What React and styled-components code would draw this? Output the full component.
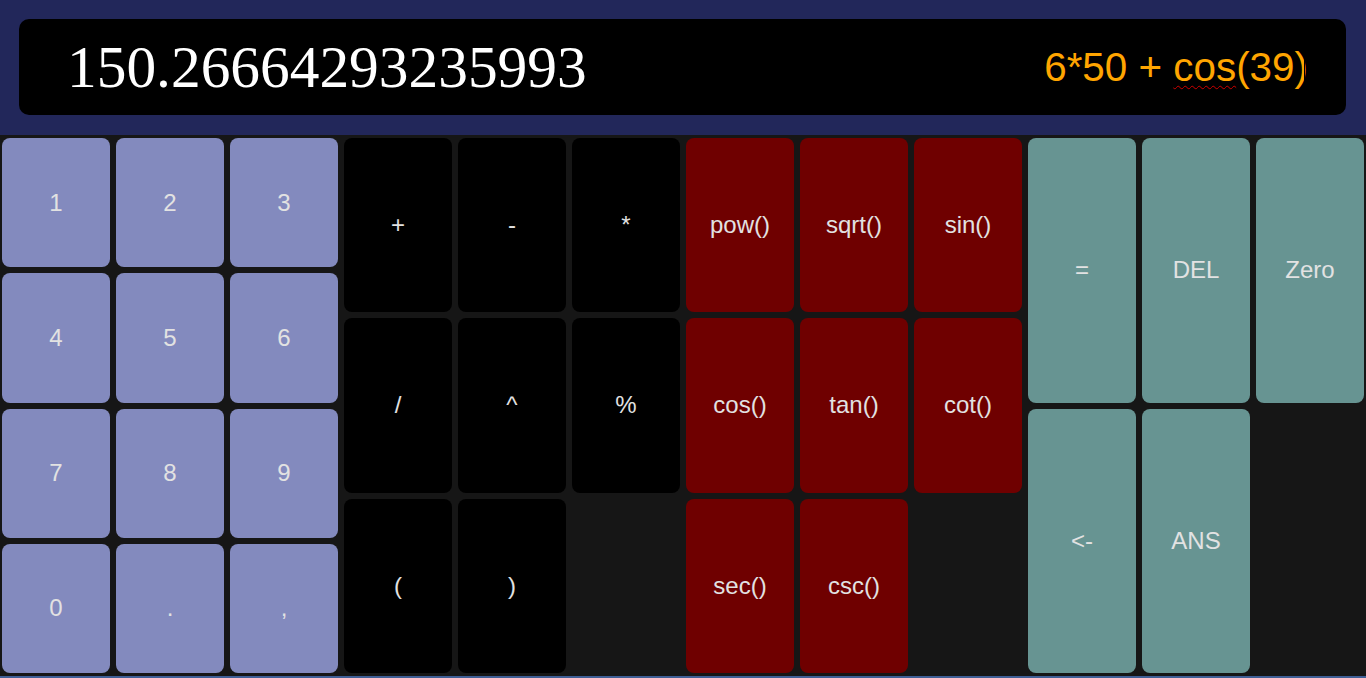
import React from "react";
import styled, { createGlobalStyle } from "styled-components";

const Global = createGlobalStyle`
  html, body { margin: 0; padding: 0; background: #161616; }
  body { font-family: "Liberation Sans", Arial, sans-serif; overflow: hidden; }
`;

const Page = styled.div`
  width: 1366px;
  height: 678px;
  display: flex;
  flex-direction: column;
  background: #161616;
`;

const Header = styled.header`
  height: 135px;
  box-sizing: border-box;
  padding: 19px 20px 20px 19px;
  background: #22275a;
`;

const Display = styled.div`
  height: 96px;
  background: #000;
  border-radius: 10px;
  display: flex;
  align-items: center;
  justify-content: space-between;
  padding: 0 41px 0 48px;
`;

const Result = styled.div`
  font-family: "Liberation Serif", "Times New Roman", serif;
  font-size: 59.4px;
  color: #fff;
  line-height: 1;
  margin-top: 2px;
`;

const Expression = styled.div`
  font-family: "Liberation Sans", Arial, sans-serif;
  font-size: 40.4px;
  color: #ffa500;
  line-height: 1;
  display: flex;
  align-items: center;
  white-space: pre;
`;

const Misspelled = styled.span`
  text-decoration: underline wavy #d00000;
  text-decoration-thickness: 1px;
  text-underline-offset: 4px;
`;

const Caret = styled.span`
  display: inline-block;
  width: 1px;
  height: 42px;
  background: #000;
  margin-left: -4px;
`;

const Keypad = styled.main`
  height: 541px;
  box-sizing: border-box;
  padding: 3px 2px;
  display: flex;
  gap: 6px;
`;

const Group = styled.section`
  flex: 1;
  display: grid;
  grid-template-columns: repeat(3, 1fr);
  grid-template-rows: repeat(${(p) => p.$rows}, 1fr);
  gap: 6px;
`;

const palette = {
  num: "#838abe",
  op: "#000000",
  fn: "#6f0000",
  ctl: "#679492",
};

const Key = styled.button`
  border: none;
  border-radius: 8px;
  background: ${(p) => palette[p.$kind]};
  color: #e2e2e2;
  font-family: "Liberation Sans", Arial, sans-serif;
  font-size: 24px;
  padding: 0;
  display: flex;
  align-items: center;
  justify-content: center;
  cursor: pointer;
`;

const Footer = styled.div`
  flex: 1;
  background: #3f5f96;
`;

const groups = [
  { kind: "num", rows: 4, keys: ["1", "2", "3", "4", "5", "6", "7", "8", "9", "0", ".", ","] },
  { kind: "op", rows: 3, keys: ["+", "-", "*", "/", "^", "%", "(", ")"] },
  { kind: "fn", rows: 3, keys: ["pow()", "sqrt()", "sin()", "cos()", "tan()", "cot()", "sec()", "csc()"] },
  { kind: "ctl", rows: 2, keys: ["=", "DEL", "Zero", "<-", "ANS"] },
];

export default function App() {
  return (
    <Page>
      <Global />
      <Header>
        <Display>
          <Result>150.26664293235993</Result>
          <Expression>
            6*50 + <Misspelled>cos</Misspelled>(39)
            <Caret />
          </Expression>
        </Display>
      </Header>
      <Keypad>
        {groups.map((g) => (
          <Group key={g.kind} $rows={g.rows}>
            {g.keys.map((k) => (
              <Key key={k} $kind={g.kind}>
                {k}
              </Key>
            ))}
          </Group>
        ))}
      </Keypad>
      <Footer />
    </Page>
  );
}
